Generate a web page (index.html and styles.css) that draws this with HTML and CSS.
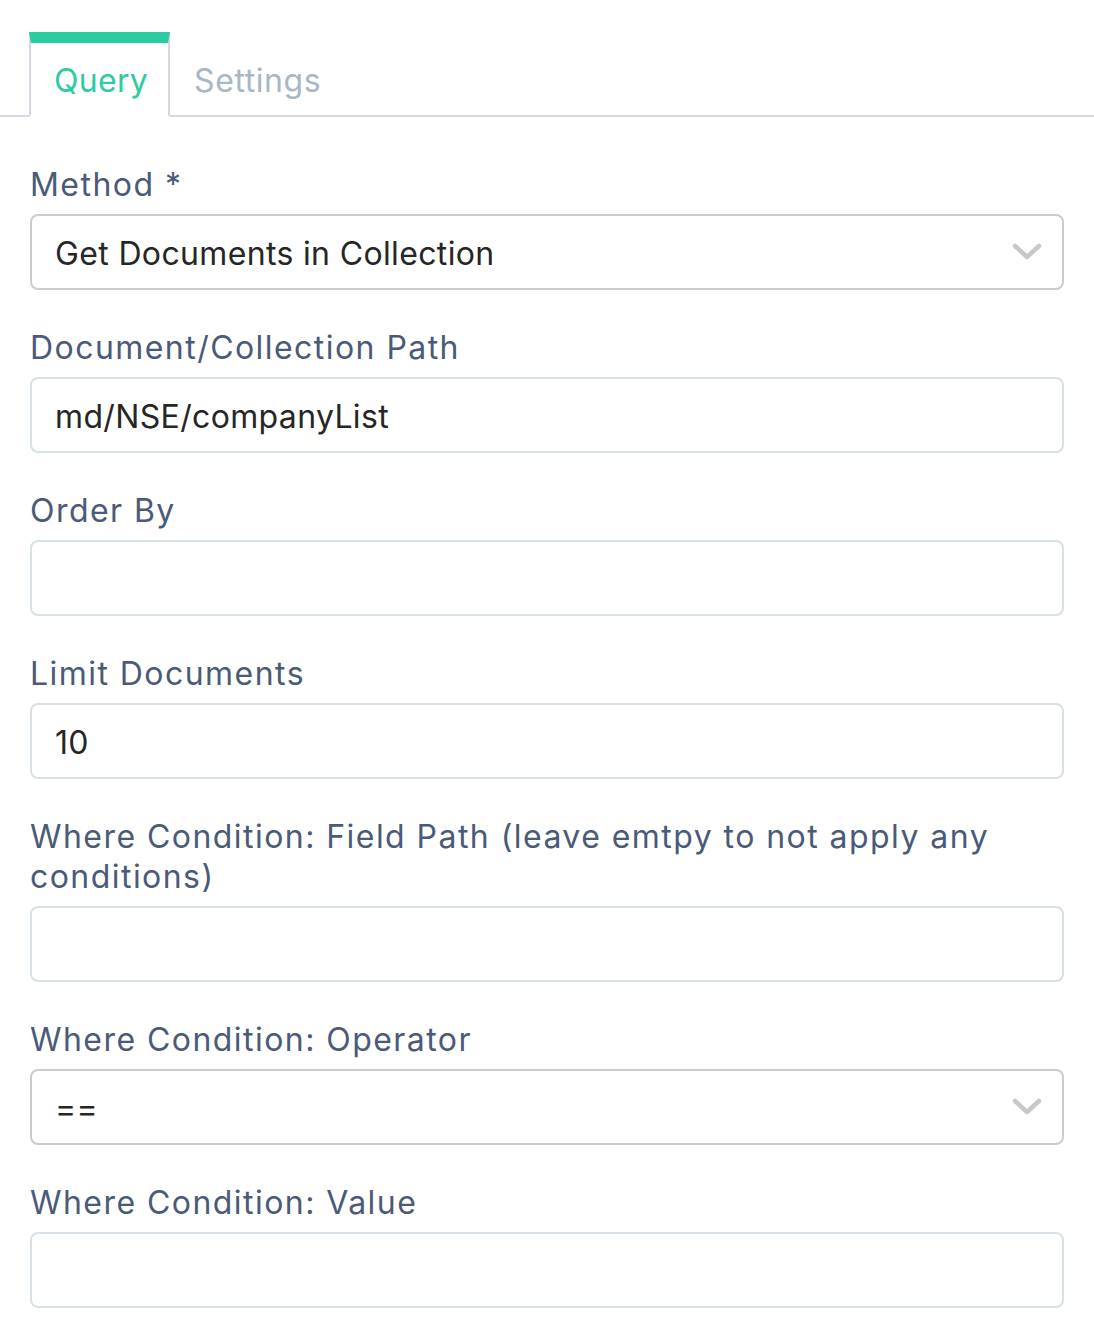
FILE: index.html
```html
<!DOCTYPE html>
<html>
<head>
<meta charset="utf-8">
<link rel="stylesheet" href="styles.css">
</head>
<body>
<div class="page">
  <div class="tabs">
    <div class="tab active">Query</div>
    <div class="tab">Settings</div>
    <div class="tab-rest"></div>
  </div>
  <form class="form">
    <div class="group">
      <div class="label">Method *</div>
      <div class="select">
        <span>Get Documents in Collection</span>
        <svg class="chev" width="30" height="18" viewBox="0 0 30 18"><path d="M3 3 L15 14 L27 3" fill="none" stroke="#c8c8c8" stroke-width="4.5" stroke-linecap="round" stroke-linejoin="round"/></svg>
      </div>
    </div>
    <div class="group">
      <div class="label">Document/Collection Path</div>
      <div class="input">md/NSE/companyList</div>
    </div>
    <div class="group">
      <div class="label">Order By</div>
      <div class="input"></div>
    </div>
    <div class="group">
      <div class="label">Limit Documents</div>
      <div class="input">10</div>
    </div>
    <div class="group">
      <div class="label">Where Condition: Field Path (leave emtpy to not apply any conditions)</div>
      <div class="input"></div>
    </div>
    <div class="group">
      <div class="label">Where Condition: Operator</div>
      <div class="select">
        <span>==</span>
        <svg class="chev" width="30" height="18" viewBox="0 0 30 18"><path d="M3 3 L15 14 L27 3" fill="none" stroke="#c8c8c8" stroke-width="4.5" stroke-linecap="round" stroke-linejoin="round"/></svg>
      </div>
    </div>
    <div class="group">
      <div class="label">Where Condition: Value</div>
      <div class="input"></div>
    </div>
  </form>
</div>
</body>
</html>
```
FILE: styles.css
```css
* { box-sizing: border-box; }
html, body { margin: 0; padding: 0; background: #fff; }
body { font-family: Inter, "Open Sans", sans-serif; }
.page { width: 1094px; }
.tabs {
  display: flex;
  padding-top: 32px;
  height: 117px;
}
.tab {
  font-size: 32px;
  line-height: 40px;
  padding: 29px 24px 0 24px;
  color: #a9b6c4;
  border-bottom: 2px solid #d3d9e0;
  letter-spacing: 0.6px;
}
.tabs::before {
  content: "";
  width: 29px;
  border-bottom: 2px solid #d3d9e0;
}
.tab.active {
  color: #2bcca2;
  border-top: 11px solid #2bcca2;
  border-left: 2px solid #d3d9e0;
  border-right: 2px solid #d3d9e0;
  border-bottom: 2px solid transparent;
  padding-top: 18px;
  width: 141px;
  padding-left: 23px;
  letter-spacing: 0.3px;
}
.tab-rest {
  flex: 1;
  border-bottom: 2px solid #d3d9e0;
}
.form {
  padding: 47px 30px 0 30px;
}
.group { margin-bottom: 37px; }
.label {
  font-size: 32px;
  line-height: 40px;
  padding-top: 1px;
  color: #4a5a78;
  margin-bottom: 9px;
  letter-spacing: 1.45px;
}
.input, .select {
  height: 76px;
  border: 2px solid #d7e1e6;
  border-radius: 8px;
  padding: 2px 24px 0 23px;
  display: flex;
  align-items: center;
  font-size: 32px;
  color: #262626;
  letter-spacing: 0.35px;
}
.select {
  border-color: #cccccc;
  justify-content: space-between;
  padding-right: 20px;
}
.chev { display: block; margin-top: -2px; }
```
